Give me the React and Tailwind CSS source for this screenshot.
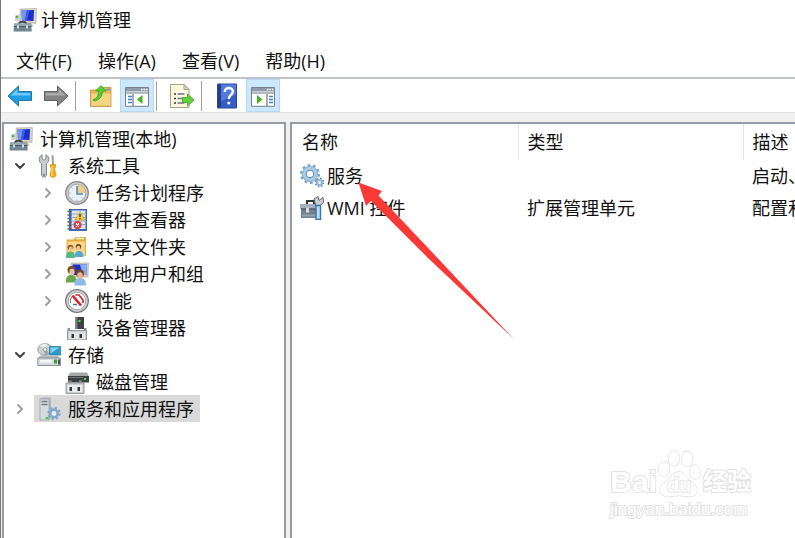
import { useState } from 'react';
import { ChevronDown, ChevronRight } from 'lucide-react';

/* Icons */

function ComputerIcon() {
  return (
    <svg viewBox="0 0 24 24" className="size-6 shrink-0" aria-hidden="true">
      <path d="M7 1 23.500 .5 23 15.500 7.500 14z" fill="#d9d5c6" stroke="#a9a698" strokeWidth=".6" />
      <path d="M8.500 2.500 21 2 20.500 13 9 12.500z" fill="#1c2fd0" />
      <path d="M8.500 2.500 14 2.300 12 12.700 9 12.500z" fill="#6f95ee" />
      <path d="M14 2.300h2.500L14 12.800l-2-.1z" fill="#3d5de0" />
      <path d="M11 14.500h7l2.500 4H13z" fill="#bdbbb0" />
      <path d="M2 7.500 7 6v7H2z" fill="#cfd3d0" />
      <circle cx="4" cy="9" r="1.300" fill="#3fbf3a" />
      <path d="M6 16c0-3 7-3 7 0" fill="none" stroke="#3b444b" strokeWidth="1.800" />
      <path d="M1 15.500h17l.8 8H.5z" fill="#71848f" />
      <path d="M1 15.500h17v2.500H1z" fill="#93a5ae" />
      <path d="M.8 18.500h17.700" stroke="#4a5b66" />
      <path d="M4 17.500h2v3H4zM13 17.500h2v3h-2z" fill="#d4dde2" />
    </svg>
  );
}

function ToolsIcon() {
  return (
    <svg viewBox="0 0 24 24" className="size-6 shrink-0" aria-hidden="true">
      <path
        d="M5 .8 5.200 5 7 6.200 8.800 5 9 .8c2 1 3 2.800 2.800 5-.2 2-1.300 3-2.300 3.800v11.200c0 3-5 3-5 0V9.600C3.300 8.800 2.200 7.800 2.200 5.800 2.200 3.500 3.200 1.800 5 .8z"
        fill="#c9cccf"
        stroke="#808588"
      />
      <circle cx="7" cy="20.800" r="1.100" fill="#77797b" />
      <path d="M14.500 1.500 16.500 1l.5 9.500h-2z" fill="#9da1a4" />
      <path d="M13.500 10.500h5v3l-1 1.500 1.500 6c0 3-6 3-6 0l1.500-6-1-1.500z" fill="#f6ae12" stroke="#d98a08" strokeWidth=".7" />
      <path d="M15 12v10" stroke="#ffe07a" />
    </svg>
  );
}

function ClockIcon() {
  return (
    <svg viewBox="0 0 24 24" className="size-6 shrink-0" aria-hidden="true">
      <circle cx="12" cy="12" r="11.300" fill="#c9cbcd" stroke="#858789" strokeWidth="1.200" />
      <circle cx="12" cy="12" r="8.800" fill="#eaf2f8" stroke="#a6a9ac" />
      <path d="M12 12V3.600A8.400 8.400 0 0 1 20.400 12z" fill="#f1cd8a" />
      <path d="M12 5v8h6" fill="none" stroke="#4b84bb" strokeWidth="1.500" />
      <path d="M12 18.500V20M4 12h1.500M6.500 6.500l1 1M6.500 17.500l1-1M17.500 17.500l-1-1" stroke="#9aa6b0" />
    </svg>
  );
}

function EventIcon() {
  return (
    <svg viewBox="0 0 24 24" className="size-6 shrink-0" aria-hidden="true">
      <path d="M4 1h18v22H4z" fill="#4468a8" />
      <path d="M6.500 2.500h14v18.500h-14z" fill="#dbe7f5" />
      <path d="M6.500 6h14M6.500 9.500h14M6.500 13h14M6.500 16.500h14" stroke="#8fa8cf" />
      <path d="M2.500 3.500h4M2.500 7h4M2.500 10.500h4M2.500 14h4M2.500 17.500h4M2.500 21h4" stroke="#59616e" strokeWidth="1.600" />
      <path d="m15 3.500 4.800 8.500h-9.600z" fill="#ffd92e" stroke="#c69a08" strokeWidth=".7" />
      <path d="M15 6v3.200M15 10v1.200" stroke="#222" strokeWidth="1.300" />
      <circle cx="12.500" cy="17" r="4" fill="#da3f45" />
      <path d="m11 15.500 3 3m0-3-3 3" stroke="#fff" strokeWidth="1.300" />
    </svg>
  );
}

function SharedFolderIcon() {
  return (
    <svg viewBox="0 0 24 24" className="size-6 shrink-0" aria-hidden="true">
      <path d="M1.500 4.500h7l2-2.500H21v19H1.500z" fill="#e3ac3d" />
      <path d="M2.500 6.500H20v14H2.500z" fill="#f8d989" />
      <path d="M11 3.500h8" stroke="#fff3c8" strokeWidth="1.500" />
      <path d="M1 23c0-5 1.500-6.500 4.500-6.500S10 18 10 23z" fill="#55b887" />
      <circle cx="5.500" cy="12.500" r="2.800" fill="#925523" />
      <ellipse cx="5.800" cy="14" rx="2" ry="2.400" fill="#f1c59b" />
      <path d="M10 22c0-5 1.500-6 4-6s4.500 1.500 4.500 6z" fill="#57a7d8" />
      <circle cx="13.500" cy="11.800" r="2.800" fill="#6e4526" />
      <ellipse cx="13.300" cy="13.200" rx="2" ry="2.400" fill="#f1c59b" />
    </svg>
  );
}

function UsersIcon() {
  return (
    <svg viewBox="0 0 24 24" className="size-6 shrink-0" aria-hidden="true">
      <path d="M6 1h17.500l-.5 14H7z" fill="#d3d1c6" stroke="#a8a69a" strokeWidth=".6" />
      <path d="M7.500 2.500H22L21.500 13H8z" fill="#1b31cf" />
      <path d="M15 2.500h7l-.5 10.500H18z" fill="#8aaef3" />
      <path d="M.8 20.500C.8 15 2.500 13 6 13s5.500 2 5.500 7.500z" fill="#67a84c" />
      <circle cx="6.500" cy="8" r="4" fill="#7c4c26" />
      <ellipse cx="7" cy="10" rx="2.600" ry="3.200" fill="#edc199" />
      <path d="M9.500 23.500c0-6 2-7.500 5.500-7.500s6 1.500 6 7.500z" fill="#8fbbe8" />
      <circle cx="15" cy="11.500" r="4" fill="#7b4624" />
      <ellipse cx="15" cy="13.500" rx="2.700" ry="3.200" fill="#e9b78e" />
    </svg>
  );
}

function PerformanceIcon() {
  return (
    <svg viewBox="0 0 24 24" className="size-6 shrink-0" aria-hidden="true">
      <circle cx="12" cy="12" r="11.300" fill="#d2d4d5" stroke="#77797b" strokeWidth="1.300" />
      <circle cx="12" cy="12" r="8.800" fill="#fff" stroke="#a1a3a5" />
      <path d="M5.500 14v-4l2-3" fill="none" stroke="#777" />
      <path d="m7.500 6.500 8.500 10" stroke="#d6202c" strokeWidth="2.600" />
      <path d="M10.500 6h3.500l4 5v3" fill="none" stroke="#d6202c" strokeWidth="1.700" />
      <path d="M8 15.500h4" stroke="#3b6fa8" strokeWidth="1.400" />
    </svg>
  );
}

function DeviceIcon() {
  return (
    <svg viewBox="0 0 24 24" className="size-6 shrink-0" aria-hidden="true">
      <path d="M10.500 1h8.500v12h-8.500z" fill="#3d4246" />
      <path d="M10.500 1h2v12h-2z" fill="#73797d" />
      <circle cx="14.500" cy="5" r="1.200" fill="#46e04c" />
      <path d="M2.500 12h2.500v4H2.500zM19 12h2.500v4H19z" fill="#8d9296" />
      <path d="M2.500 14.500h19V24h-19z" fill="#c9cdd0" stroke="#878c90" strokeWidth=".8" />
      <path d="M4 16.500h16V23H4z" fill="#e3e5e7" />
      <path d="M6.500 18h2.500v4H6.500zM14.500 18H17v4h-2.500z" fill="#333" />
    </svg>
  );
}

function StorageIcon() {
  return (
    <svg viewBox="0 0 24 24" className="size-6 shrink-0" aria-hidden="true">
      <ellipse cx="8" cy="6.500" rx="7.300" ry="6" fill="#cbd0d0" stroke="#8e9595" strokeWidth=".8" />
      <path d="M8 6.500 3 2.500C5 1 8 .5 10 .8z" fill="#edf4ec" />
      <path d="m8 6.500 5 4c-2 1.700-4 2-6 1.900z" fill="#9fa9a8" />
      <circle cx="8" cy="6.500" r="1.800" fill="#fff" stroke="#8e9595" />
      <path d="M12.500 3.500h11.200v8.500H12.500z" fill="#2d9bc9" stroke="#267397" strokeWidth=".7" />
      <path d="M13.500 4.500h9l-9 6z" fill="#85d1ec" />
      <path d="M3 12.500h18l2.500 4H.8z" fill="#b5babf" />
      <path d="M.8 15h22.700v7.500H.8z" fill="#d7d9e0" stroke="#858990" strokeWidth=".9" />
      <path d="M3 17h12v2.500H3z" fill="#f7f7fa" />
      <path d="M17 16.500h3v4h-3z" fill="#439b36" />
      <path d="M21 16.500h2v5h-2z" fill="#4e555b" />
    </svg>
  );
}

function DiskIcon() {
  return (
    <svg viewBox="0 0 24 24" className="size-6 shrink-0" aria-hidden="true">
      <path d="M5 2.500h17l2 4H3z" fill="#a4a8ab" />
      <path d="M3 6h21v6.500H3z" fill="#3b3f42" />
      <path d="M4 7.500h14" stroke="#6c7276" />
      <circle cx="20" cy="9" r="1.300" fill="#43dc44" />
      <path d="M3.500 10.500h3v3h-3zM14 10.500h3v3h-3z" fill="#888e92" />
      <path d="M1 13h18v10.500H1z" fill="#cbced1" stroke="#85898c" strokeWidth=".8" />
      <path d="M2.500 15h15v7h-15z" fill="#e9ebec" />
      <path d="M4.500 17h2.500v4H4.500zM12.500 17H15v4h-2.500z" fill="#353535" />
    </svg>
  );
}

function ServerGearIcon() {
  return (
    <svg viewBox="0 0 24 24" className="size-6 shrink-0" aria-hidden="true">
      <path d="M3 2 6 .5h8V21l-2 2H3z" fill="#aeb7bd" />
      <path d="M3 2h9v21H3z" fill="#d5dce0" stroke="#89949b" strokeWidth=".6" />
      <path d="M4.500 4.500h6M4.500 7.500h6" stroke="#6a7a84" strokeWidth="1.500" />
      <path d="M8.500 20h3v2h-3z" fill="#48c437" />
      <circle cx="17" cy="16.500" r="5.600" fill="none" stroke="#83a9ce" strokeWidth="2.200" strokeDasharray="2.200 2.198" />
      <circle cx="17" cy="16.500" r="3.700" fill="none" stroke="#83a9ce" strokeWidth="2.600" />
      <circle cx="17" cy="16.500" r="2.200" fill="#e8eff5" />
    </svg>
  );
}

function GearsIcon() {
  return (
    <svg viewBox="0 0 24 24" className="size-6 shrink-0" aria-hidden="true">
      <circle cx="10" cy="10" r="8.600" fill="none" stroke="#7da2bf" strokeWidth="2.800" strokeDasharray="2.700 2.704" />
      <circle cx="10" cy="10" r="5.900" fill="none" stroke="#a7cce3" strokeWidth="4.200" />
      <circle cx="10" cy="10" r="7.600" fill="none" stroke="#83aaca" strokeWidth=".8" />
      <circle cx="10" cy="10" r="3.800" fill="#fff" stroke="#5787ae" />
      <circle cx="19.500" cy="18.500" r="4.100" fill="none" stroke="#6f94b1" strokeWidth="1.800" strokeDasharray="1.610 1.610" />
      <circle cx="19.500" cy="18.500" r="2.500" fill="#fff" stroke="#8fb5cf" strokeWidth="2.200" />
    </svg>
  );
}

function ToolboxIcon() {
  return (
    <svg viewBox="0 0 24 24" className="size-6 shrink-0" aria-hidden="true">
      <path d="M7 8V5h7v3" fill="none" stroke="#30373c" strokeWidth="2.200" />
      <path d="M0 8h19v5H0z" fill="#a4b0b9" />
      <path d="M1 12.500h20V22H1z" fill="#72828f" />
      <path d="M1 13h20" stroke="#4b565f" strokeWidth="1.200" />
      <path d="M6 11.500h3v5H6z" fill="#d6dee4" />
      <path d="M2 19.500h14" stroke="#93a1ac" strokeWidth="2" />
      <path d="m14 3 4-2.500 1 4 4-3 .8 4.500-3.800 4H16z" fill="#c8ced3" stroke="#60676d" />
      <path d="M16 9.500h4.500v14H16z" fill="#bcdcf5" stroke="#3673ad" strokeWidth="1.400" />
    </svg>
  );
}

function ArrowIcon({ dir }) {
  const back = dir === 'back';
  return (
    <svg viewBox="0 0 26 22" className="h-[22px] w-[26px]" aria-hidden="true">
      <path
        d={
          back
            ? 'M1 11 11.500 1v5.500H24.500V15.500H11.500V21z'
            : 'M25 11 14.500 1v5.500H1.500V15.500H14.500V21z'
        }
        fill={back ? '#1d9de4' : '#858585'}
        stroke={back ? '#2873a5' : '#626262'}
        strokeLinejoin="round"
      />
      <path
        d={back ? 'M3.500 10.500 10.500 4v4H23v2.500z' : 'M22.500 10.500 15.500 4v4H3v2.500z'}
        fill={back ? '#6fcbf6' : '#ababab'}
      />
    </svg>
  );
}

function FolderUpIcon() {
  return (
    <svg viewBox="0 0 24 24" className="size-6" aria-hidden="true">
      <path d="M1.500 6h8l2-2.500H22V22.500H1.500z" fill="#e6b956" stroke="#bd923d" strokeWidth=".8" />
      <path d="M2.500 9.500H21.500v12H2.500z" fill="#f4d583" />
      <path d="M17 5.500h4" stroke="#5e9bd0" strokeWidth="1.600" />
      <path d="M4 15.500C8 15 9.500 11 9.500 7H6.500L12 1.500l5 5.500h-3.500c0 5.500-3.500 9.500-8.500 10z" fill="#53cf32" stroke="#2f9820" strokeWidth=".7" />
    </svg>
  );
}

function PaneIcon({ side }) {
  const left = side === 'left';
  return (
    <svg viewBox="0 0 24 24" className="size-6" aria-hidden="true">
      <path d="M.5 3.500h23v18.800H.5z" fill="#fff" stroke="#76808b" />
      <path d="M1 4h22v3.500H1z" fill="#8f9cab" />
      <path d="M16 5.500h1.500M18.500 5.500H20M21 5.500h1.500" stroke="#fff" strokeWidth="1.300" />
      <path d="M1 9h22" stroke="#9aa3ad" strokeWidth="1.500" />
      <path d={left ? 'M8 10v12' : 'M16 10v12'} stroke="#76808b" strokeWidth="1.300" />
      <path
        d={left ? 'M3 12.500h4M3 15.500h4M3 18.500h4' : 'M18 12.500h4M18 15.500h4M18 18.500h4'}
        stroke="#477fc2"
        strokeWidth="1.600"
      />
      <path d={left ? 'M17.500 11v9L12 15.500z' : 'M6 11v9l5.500-4.500z'} fill="#43b51f" />
    </svg>
  );
}

function ExportIcon() {
  return (
    <svg viewBox="0 0 26 26" className="size-[26px]" aria-hidden="true">
      <path d="M1.500 1.500h13.500l5 5v18H1.500z" fill="#fcf7df" stroke="#aaa483" />
      <path d="M15 1.500v5h5z" fill="#d8d4c2" stroke="#aaa483" />
      <path d="M5 11h2M5 15.500h2M5 20h2" stroke="#333" strokeWidth="1.600" />
      <path d="M8.500 11h7M8.500 15.500h5M8.500 20h7" stroke="#706f94" strokeWidth="1.300" />
      <path d="M13.500 14.500h5v-3.500l6.500 6-6.500 6v-3.500h-5z" fill="#61d13b" stroke="#3aa321" strokeWidth=".8" />
    </svg>
  );
}

function HelpIcon() {
  return (
    <svg viewBox="0 0 20 26" className="h-[26px] w-5" aria-hidden="true">
      <path d="M.5 1h19v24H.5z" fill="#345ccb" stroke="#2c4795" />
      <path d="M1 1.500h3v23H1z" fill="#213c91" />
      <path d="M4 1.500h15v10L4 18z" fill="#5479de" />
      <path
        d="M7.800 9c0-5.500 8-5 8-.5 0 3.500-4 3.500-4 7.500"
        fill="none"
        stroke="#fff"
        strokeWidth="2.400"
      />
      <circle cx="11.800" cy="20" r="1.600" fill="#fff" />
    </svg>
  );
}

/* Data */

const menus = ['文件(F)', '操作(A)', '查看(V)', '帮助(H)'];

const tree = [
  {
    label: '系统工具',
    icon: ToolsIcon,
    open: true,
    children: [
      { label: '任务计划程序', icon: ClockIcon, children: [] },
      { label: '事件查看器', icon: EventIcon, children: [] },
      { label: '共享文件夹', icon: SharedFolderIcon, children: [] },
      { label: '本地用户和组', icon: UsersIcon, children: [] },
      { label: '性能', icon: PerformanceIcon, children: [] },
      { label: '设备管理器', icon: DeviceIcon },
    ],
  },
  {
    label: '存储',
    icon: StorageIcon,
    open: true,
    children: [{ label: '磁盘管理', icon: DiskIcon }],
  },
  { label: '服务和应用程序', icon: ServerGearIcon, children: [] },
];

const rows = [
  { name: '服务', type: '', desc: '启动、', icon: GearsIcon },
  { name: 'WMI 控件', type: '扩展管理单元', desc: '配置和', icon: ToolboxIcon },
];

/* Parts */

function ToolButton({ label, pressed, children }) {
  return (
    <button
      type="button"
      aria-label={label}
      aria-pressed={pressed}
      className={
        pressed
          ? 'flex h-full w-[34px] items-center justify-center border border-[#b5d9f5] bg-[#cce8ff] pt-px'
          : 'flex h-full w-[34px] items-center justify-center pt-px'
      }
    >
      {children}
    </button>
  );
}

function Separator() {
  return <div className="mr-1.5 h-[30px] w-px bg-[#a0a0a0]" />;
}

function TreeLabel({ node, selected, onSelect }) {
  const Icon = node.icon;
  return (
    <button
      type="button"
      onClick={() => onSelect(node.label)}
      className={
        selected
          ? 'flex h-[27px] items-center gap-[7px] bg-[#d9d9d9] pr-1.5 pl-[3px]'
          : 'flex h-[27px] items-center gap-[7px] pr-1.5 pl-[3px]'
      }
    >
      <Icon />
      {node.label}
    </button>
  );
}

function TreeNode({ node, selected, onSelect }) {
  const [open, setOpen] = useState(Boolean(node.open));

  return (
    <li>
      <div className="flex items-center whitespace-nowrap">
        {node.children ? (
          <button
            type="button"
            aria-label={`${open ? '折叠' : '展开'} ${node.label}`}
            onClick={() => setOpen(!open)}
            className="flex w-7 justify-center"
          >
            {open ? (
              <ChevronDown className="size-4 text-[#404040]" strokeWidth={3} />
            ) : (
              <ChevronRight className="size-4 text-[#a0a0a0]" strokeWidth={3} />
            )}
          </button>
        ) : (
          <span className="w-7" />
        )}
        <TreeLabel node={node} selected={selected === node.label} onSelect={onSelect} />
      </div>
      {open && node.children.length > 0 && (
        <ul className="pl-7">
          {node.children.map((child) => (
            <TreeNode key={child.label} node={child} selected={selected} onSelect={onSelect} />
          ))}
        </ul>
      )}
    </li>
  );
}

function Watermark() {
  return (
    <div className="pointer-events-none absolute right-11 bottom-4 font-['Liberation_Sans','Noto_Sans_CJK_SC',sans-serif] text-white [-webkit-text-stroke:2px_#e2e2e2] [paint-order:stroke_fill]">
      <div className="flex items-end">
        <span className="text-[30px] leading-8 font-bold">Bai</span>
        <svg viewBox="0 0 46 50" className="h-[50px] w-[46px]" aria-hidden="true">
          <g fill="#fff" stroke="#dedede" strokeWidth="1.300">
            <ellipse cx="7" cy="21" rx="5.500" ry="7" />
            <ellipse cx="17" cy="10.500" rx="5.500" ry="7.500" />
            <ellipse cx="30" cy="11" rx="5.500" ry="7.500" />
            <ellipse cx="38" cy="24" rx="5.500" ry="7" />
            <path d="M22 24c-5 0-8 4-11 8-6 4-8 6-8 10s4 6.500 8 6.500 7-1 11-1 7 1 11 1 7-2.500 7-6.500-3-6-8-10c-3-4-5-8-10-8z" />
            <text x="10" y="44" fontSize="20" fontWeight="bold">
              du
            </text>
          </g>
        </svg>
        <span className="text-2xl leading-8 font-bold">经验</span>
      </div>
      <div className="text-[17px] leading-6">jingyan.baidu.com</div>
    </div>
  );
}

export default function App() {
  const [selected, setSelected] = useState('服务和应用程序');

  return (
    <div className="relative flex min-h-screen flex-col overflow-hidden border-l border-[#777] bg-[#f0f0f0] font-['Open_Sans','Noto_Sans_CJK_SC',sans-serif] text-lg leading-6 text-[#111]">
      {/* Title bar */}
      <header className="flex h-10 items-center gap-1 bg-white pl-3">
        <ComputerIcon />
        <h1>计算机管理</h1>
      </header>

      {/* Menu bar */}
      <nav className="flex h-[37px] items-center gap-[26px] bg-white pt-1 pl-[15px]">
        {menus.map((menu) => (
          <button key={menu} type="button">
            {menu}
          </button>
        ))}
      </nav>

      {/* Toolbar */}
      <div className="flex h-9 items-center gap-0.5 border-t-2 border-b border-t-[#c0c3c7] border-b-[#e2e2e2] bg-white pl-0.5">
        <ToolButton label="后退">
          <ArrowIcon dir="back" />
        </ToolButton>
        <ToolButton label="前进">
          <ArrowIcon dir="forward" />
        </ToolButton>
        <Separator />
        <ToolButton label="向上一级">
          <FolderUpIcon />
        </ToolButton>
        <ToolButton label="显示控制台树" pressed>
          <PaneIcon side="left" />
        </ToolButton>
        <Separator />
        <ToolButton label="导出列表">
          <ExportIcon />
        </ToolButton>
        <Separator />
        <ToolButton label="帮助">
          <HelpIcon />
        </ToolButton>
        <ToolButton label="显示操作窗格" pressed>
          <PaneIcon side="right" />
        </ToolButton>
      </div>

      <main className="flex flex-1 gap-1 pt-[9px] pl-px">
        {/* Console tree */}
        <aside className="w-[284px] shrink-0 border-2 border-b-0 border-[#979ba3] bg-white px-0.5 pt-px">
          <TreeLabel
            node={{ label: '计算机管理(本地)', icon: ComputerIcon }}
            selected={selected === '计算机管理(本地)'}
            onSelect={setSelected}
          />
          <ul>
            {tree.map((node) => (
              <TreeNode key={node.label} node={node} selected={selected} onSelect={setSelected} />
            ))}
          </ul>
        </aside>

        {/* Details */}
        <section className="relative min-w-0 flex-1 overflow-hidden border-t-2 border-l-2 border-[#979ba3] bg-white">
          <table className="w-full table-fixed text-left whitespace-nowrap">
            <colgroup>
              <col className="w-[226px]" />
              <col className="w-[225px]" />
              <col />
            </colgroup>
            <thead>
              <tr className="h-9">
                <th className="border-r border-[#e5e5e5] pl-2.5 font-normal">名称</th>
                <th className="border-r border-[#e5e5e5] pl-[9px] font-normal">类型</th>
                <th className="pl-[9px] font-normal">描述</th>
              </tr>
            </thead>
            <tbody>
              {rows.map((row) => (
                <tr key={row.name} className="h-8">
                  <td className="pl-2">
                    <div className="flex items-center gap-[3px]">
                      <row.icon />
                      {row.name}
                    </div>
                  </td>
                  <td className="pl-[9px]">{row.type}</td>
                  <td className="pl-[9px]">{row.desc}</td>
                </tr>
              ))}
            </tbody>
          </table>

          {/* Pointer to the services row */}
          <svg
            viewBox="0 0 157 158"
            className="pointer-events-none absolute top-[58px] left-[66px] h-[158px] w-[157px]"
            aria-hidden="true"
          >
            <path d="M.5.5 24 9 20.500 13.500 72 68 156.500 157.800 70 76 13 19 8 24z" fill="#fb3a38" />
          </svg>
        </section>
      </main>

      <Watermark />
    </div>
  );
}
